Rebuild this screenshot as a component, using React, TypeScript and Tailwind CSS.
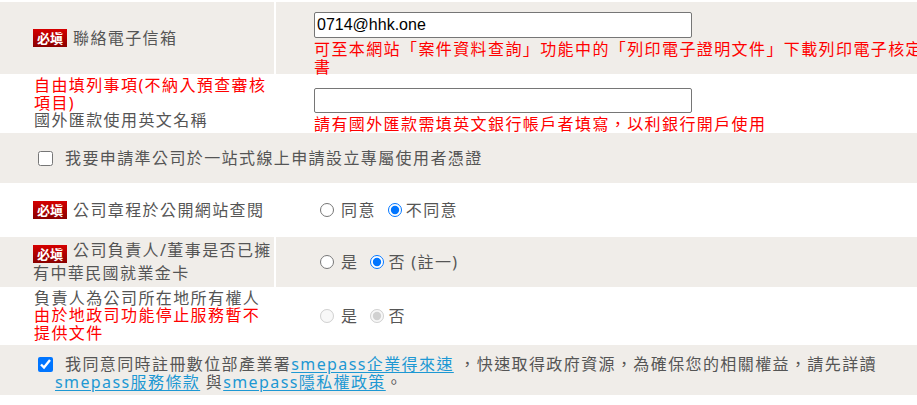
import React from 'react';

const cell = 'bg-[#f0ede9]';

function Badge() {
  return (
    <span className="inline-block w-[34px] h-[18px] leading-[18px] text-center align-[-3px] mr-[6px] bg-linear-to-b from-[#d60000] to-[#8a0000] text-white text-[13px] font-bold tracking-[0px]">
      必塡
    </span>
  );
}

function Radio({ name, checked, disabled }: { name: string; checked?: boolean; disabled?: boolean }) {
  return (
    <input
      type="radio"
      name={name}
      defaultChecked={checked}
      disabled={disabled}
      className="w-[14px] h-[14px] m-0 shrink-0"
    />
  );
}

function RadioPair({ name, a, b, second, disabled }: { name: string; a: string; b: string; second?: boolean; disabled?: boolean }) {
  return (
    <div className="flex items-center leading-[20px]">
      <span className="ml-[6px] flex items-center">
        <Radio name={name} checked={!second} disabled={disabled} />
      </span>
      <span className="ml-[7px]">{a}</span>
      <span className="ml-[12px] flex items-center">
        <Radio name={name} checked={second} disabled={disabled} />
      </span>
      <span className="ml-[4px]">{b}</span>
    </div>
  );
}

export default function App() {
  return (
    <div className="w-[917px] h-[405px] overflow-hidden bg-white">
      <div className="w-[930px] pt-[2px] text-[16px] tracking-[1.4px] text-[#555] font-['Noto_Sans','Noto_Sans_CJK_TC',sans-serif]">
        {/* 聯絡電子信箱 */}
        <div className="flex gap-[2px] h-[72px]">
          <div className={`w-[274px] shrink-0 ${cell} pl-[33px] flex items-center leading-[20px]`}>
            <Badge />
            <span>聯絡電子信箱</span>
          </div>
          <div className={`flex-1 ${cell} pl-[38px] pt-[10px]`}>
            <input
              defaultValue="0714@hhk.one"
              className="block w-[378px] h-[26px] border border-[#767676] rounded-[2px] px-[2px] bg-white text-[16px] text-black tracking-normal font-['Liberation_Sans',Arial,sans-serif] outline-none"
            />
            <p className="mt-[2px] leading-[18px] text-[#ff0000]">
              可至本網站「案件資料查詢」功能中的「列印電子證明文件」下載列印電子核定書
            </p>
          </div>
        </div>

        {/* 國外匯款使用英文名稱 */}
        <div className="flex gap-[2px] h-[59px]">
          <div className="w-[274px] shrink-0 pl-[34px] flex flex-col justify-center leading-[17.5px]">
            <p className="text-[#ff0000]">自由填列事項(不納入預查審核項目)</p>
            <p>國外匯款使用英文名稱</p>
          </div>
          <div className="flex-1 pl-[38px] pt-[14px]">
            <input className="block w-[378px] h-[25px] border border-[#767676] rounded-[2px] bg-white outline-none" />
            <p className="mt-[2px] leading-[18px] text-[#ff0000]">請有國外匯款需填英文銀行帳戶者填寫，以利銀行開戶使用</p>
          </div>
        </div>

        {/* 使用者憑證 */}
        <div className={`h-[50px] ${cell} flex items-center pl-[38px] leading-[20px]`}>
          <input type="checkbox" className="w-[15px] h-[15px] m-0 mr-[12px] shrink-0" />
          <span>我要申請準公司於一站式線上申請設立專屬使用者憑證</span>
        </div>

        {/* 公司章程 */}
        <div className="flex gap-[2px] h-[54px]">
          <div className="w-[274px] shrink-0 pl-[33px] flex items-center leading-[20px]">
            <Badge />
            <span>公司章程於公開網站查閱</span>
          </div>
          <div className="flex-1 pl-[38px] flex items-center">
            <RadioPair name="charter" a="同意" b="不同意" second />
          </div>
        </div>

        {/* 就業金卡 */}
        <div className="flex gap-[2px] h-[50px]">
          <div className={`w-[274px] shrink-0 ${cell} pl-[33px] flex items-center`}>
            <div className="w-[241px] leading-[21px]">
              <Badge />
              公司負責人/董事是否已擁有中華民國就業金卡
            </div>
          </div>
          <div className={`flex-1 ${cell} pl-[38px] flex items-center`}>
            <RadioPair name="goldcard" a="是" b="否 (註一)" second />
          </div>
        </div>

        {/* 所有權人 */}
        <div className="flex gap-[2px] h-[58px]">
          <div className="w-[274px] shrink-0 pl-[34px] flex items-center">
            <div className="w-[240px] leading-[17.5px]">
              <p>負責人為公司所在地所有權人</p>
              <p className="text-[#ff0000]">由於地政司功能停止服務暫不提供文件</p>
            </div>
          </div>
          <div className="flex-1 pl-[38px] flex items-center">
            <RadioPair name="owner" a="是" b="否" second disabled />
          </div>
        </div>

        {/* smepass */}
        <div className={`h-[50px] ${cell} pl-[55px] pr-[2px] pt-[10px] leading-[18px]`}>
          <input
            type="checkbox"
            defaultChecked
            className="inline-block w-[15px] h-[15px] m-0 -ml-[17px] mr-[12px] align-[-2px]"
          />
          我同意同時註冊數位部產業署
          <a className="text-[#1d98d3] underline underline-offset-2">smepass企業得來速</a>
          {' '}，快速取得政府資源，為確保您的相關權益，請先詳讀
          <a className="text-[#1d98d3] underline underline-offset-2">smepass服務條款</a>
          {' '}與
          <a className="text-[#1d98d3] underline underline-offset-2">smepass隱私權政策</a>。
        </div>
      </div>
    </div>
  );
}
